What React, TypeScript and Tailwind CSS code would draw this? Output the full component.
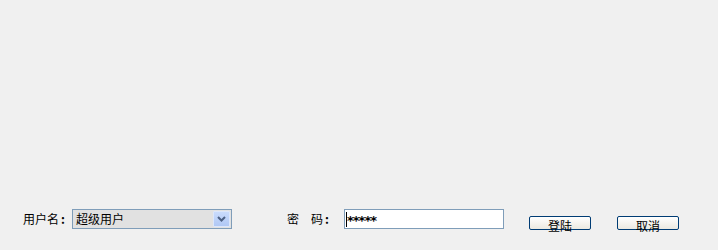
import React from "react";

const font = { fontFamily: '"Noto Sans CJK SC", "DejaVu Sans", sans-serif' };

function XpButton({ label }: { label: string }) {
  return (
    <div className="w-[62px] h-[14px] mt-[7px] rounded-[2px] border border-[#003c74] bg-gradient-to-b from-[#ffffff] to-[#ece9e0] flex justify-center overflow-visible">
      <span className="text-[12px] leading-[17px] text-black whitespace-nowrap">{label}</span>
    </div>
  );
}

export default function App() {
  return (
    <div className="w-[718px] h-[250px] bg-[#f0f0f0] flex flex-col justify-end pb-[20px]" style={font}>
      <div className="flex items-start pl-[23px]">
        {/* user select */}
        <div className="w-[49px] h-[20px] text-[12px] leading-[20px] text-black whitespace-nowrap">
          用户名<span className="font-bold ml-[2px]">:</span>
        </div>
        <div className="w-[160px] h-[20px] border border-[#7f9db9] bg-[#e1e1e1] flex items-stretch">
          <div className="flex-1 pl-[3px] text-[12px] leading-[18px] text-black">超级用户</div>
          <div className="w-[17px] my-[1px] mr-[1px] border border-[#dbe6fb] rounded-[1px] bg-gradient-to-b from-[#c9dbfc] to-[#b0c8f5] flex items-center justify-center">
            <svg width="9" height="6" viewBox="0 0 9 6">
              <polyline points="1,1 4.5,4.5 8,1" fill="none" stroke="#4d6185" strokeWidth="2" />
            </svg>
          </div>
        </div>

        {/* password */}
        <div className="ml-[55px] w-[57px] h-[20px] text-[12px] leading-[20px] text-black flex whitespace-nowrap">
          <span>密</span>
          <span className="ml-[12px]">码<span className="font-bold ml-[2px]">:</span></span>
        </div>
        <div className="w-[160px] h-[20px] border border-[#7f9db9] bg-white flex items-center pl-[1px]">
          <div className="w-px h-[15px] bg-black" />
          <span
            className="text-[13px] leading-[18px] font-bold text-black tracking-[-1px] pt-[3px]"
            style={{ fontFamily: '"DejaVu Sans", sans-serif' }}
          >
            *****
          </span>
        </div>

        {/* buttons */}
        <div className="ml-[25px]">
          <XpButton label="登陆" />
        </div>
        <div className="ml-[26px]">
          <XpButton label="取消" />
        </div>
      </div>
    </div>
  );
}
